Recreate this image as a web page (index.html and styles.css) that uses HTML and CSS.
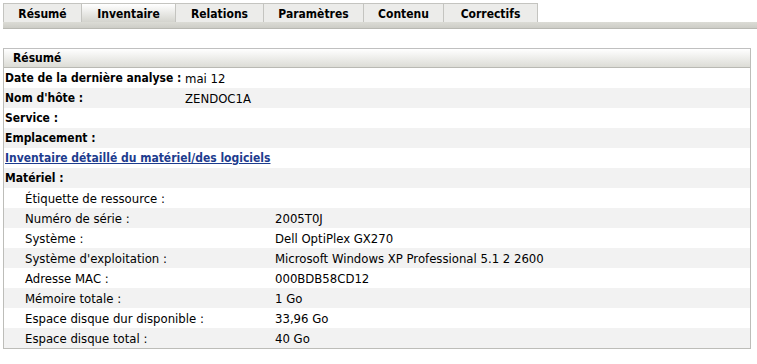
FILE: index.html
```html
<!DOCTYPE html>
<html lang="fr">
<head>
<meta charset="utf-8">
<link rel="stylesheet" href="styles.css">
</head>
<body>
<div class="tabs">
  <div class="tab-row">
    <div class="tab w1">Résumé</div>
    <div class="tab w2 active">Inventaire</div>
    <div class="tab w3">Relations</div>
    <div class="tab w4">Paramètres</div>
    <div class="tab w5">Contenu</div>
    <div class="tab w6">Correctifs</div>
  </div>
  <div class="tab-bar"></div>
</div>

<div class="panel">
  <div class="panel-head">Résumé</div>
  <div class="row"><span class="lab b lw1">Date de la dernière analyse :</span><span class="val">mai 12</span></div>
  <div class="row alt"><span class="lab b lw1">Nom d'hôte :</span><span class="val">ZENDOC1A</span></div>
  <div class="row"><span class="lab b">Service :</span></div>
  <div class="row alt"><span class="lab b">Emplacement :</span></div>
  <div class="row"><a class="link" href="#">Inventaire détaillé du matériel/des logiciels</a></div>
  <div class="row alt"><span class="lab b">Matériel :</span></div>
  <div class="row sub"><span class="lab lw2">Étiquette de ressource :</span><span class="val"></span></div>
  <div class="row sub alt"><span class="lab lw2">Numéro de série :</span><span class="val">2005T0J</span></div>
  <div class="row sub"><span class="lab lw2">Système :</span><span class="val">Dell OptiPlex GX270</span></div>
  <div class="row sub alt"><span class="lab lw2">Système d'exploitation :</span><span class="val">Microsoft Windows XP Professional 5.1 2 2600</span></div>
  <div class="row sub"><span class="lab lw2">Adresse MAC :</span><span class="val">000BDB58CD12</span></div>
  <div class="row sub alt"><span class="lab lw2">Mémoire totale :</span><span class="val">1 Go</span></div>
  <div class="row sub"><span class="lab lw2">Espace disque dur disponible :</span><span class="val">33,96 Go</span></div>
  <div class="row sub alt"><span class="lab lw2">Espace disque total :</span><span class="val">40 Go</span></div>
</div>
</body>
</html>
```

FILE: styles.css
```css
html, body {
  margin: 0;
  padding: 0;
  background: #fff;
}
body {
  font-family: "DejaVu Sans Condensed", "DejaVu Sans", Verdana, sans-serif;
  font-stretch: semi-condensed;
  font-size: 13px;
  color: #000;
  padding: 3px 0 0 3px;
}
.tabs {
  width: 754px;
}
.tab-row {
  display: flex;
  height: 19px;
}
.tab {
  box-sizing: border-box;
  height: 19px;
  background: #ececea;
  border: 1px solid #c4c4c0;
  border-bottom: none;
  margin-right: -1px;
  font-weight: bold;
  font-size: 12px;
  display: flex;
  align-items: center;
  justify-content: center;
  padding-top: 1px;
}
.tab.active {
  background: linear-gradient(#ffffff, #d4d4ce);
}
.w1 { width: 79px; }
.w2 { width: 95px; }
.w3 { width: 89px; }
.w4 { width: 101px; }
.w5 { width: 81px; }
.w6 { width: 95px; }
.tab-bar {
  height: 6px;
  background: linear-gradient(#dcdcd6, #cdcdc7);
  border-bottom: 1px solid #b8b8b2;
}
.panel {
  margin-top: 19px;
  width: 746px;
  border: 1px solid #bdbdb9;
  border-top-color: #c0c0c0;
}
.panel-head {
  height: 18px;
  line-height: 18px;
  padding-left: 9px;
  font-weight: bold;
  font-size: 12px;
  background: linear-gradient(#ffffff, #dcdcd6);
  border-bottom: 1px solid #b9b9b3;
}
.row {
  display: flex;
  height: 20px;
  align-items: center;
  padding-left: 1px;
}
.row.alt { background: #f2f2f2; }
.row.sub { padding-left: 21px; }
.b { font-weight: bold; font-size: 12px; }
.lab { flex: none; }
.lw1 { width: 180px; }
.lw2 { width: 250px; }
.val { flex: none; }
.link {
  color: #1d3c8e;
  font-weight: bold;
  font-size: 12px;
  text-decoration: underline;
}
```
